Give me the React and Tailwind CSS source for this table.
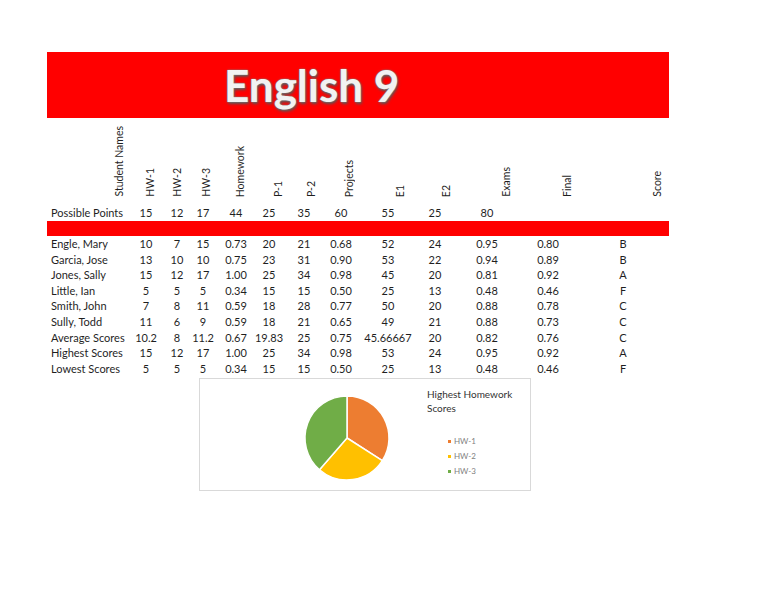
import React from "react";

const cols =
  "grid grid-cols-[84px_30px_32px_20px_46px_20px_50px_24px_70px_24px_80px_42px_108px]";

// header labels with left margin (in a centered cell) to nudge them right
const headers = [
  { label: "Student Names", ml: "ml-[60px]" },
  { label: "HW-1", ml: "ml-[8px]" },
  { label: "HW-2", ml: "ml-0" },
  { label: "HW-3", ml: "ml-[6px]" },
  { label: "Homework", ml: "ml-[8px]" },
  { label: "P-1", ml: "ml-[18px]" },
  { label: "P-2", ml: "ml-[14px]" },
  { label: "Projects", ml: "ml-[16px]" },
  { label: "E1", ml: "ml-[24px]" },
  { label: "E2", ml: "ml-[22px]" },
  { label: "Exams", ml: "ml-[38px]" },
  { label: "Final", ml: "ml-[38px]" },
  { label: "Score", ml: "ml-[68px]" },
];

const possible = ["15", "12", "17", "44", "25", "35", "60", "55", "25", "80", "", ""];

const rows = [
  ["Engle, Mary", "10", "7", "15", "0.73", "20", "21", "0.68", "52", "24", "0.95", "0.80", "B"],
  ["Garcia, Jose", "13", "10", "10", "0.75", "23", "31", "0.90", "53", "22", "0.94", "0.89", "B"],
  ["Jones, Sally", "15", "12", "17", "1.00", "25", "34", "0.98", "45", "20", "0.81", "0.92", "A"],
  ["Little, Ian", "5", "5", "5", "0.34", "15", "15", "0.50", "25", "13", "0.48", "0.46", "F"],
  ["Smith, John", "7", "8", "11", "0.59", "18", "28", "0.77", "50", "20", "0.88", "0.78", "C"],
  ["Sully, Todd", "11", "6", "9", "0.59", "18", "21", "0.65", "49", "21", "0.88", "0.73", "C"],
  ["Average Scores", "10.2", "8", "11.2", "0.67", "19.83", "25", "0.75", "45.66667", "20", "0.82", "0.76", "C"],
  ["Highest Scores", "15", "12", "17", "1.00", "25", "34", "0.98", "53", "24", "0.95", "0.92", "A"],
  ["Lowest Scores", "5", "5", "5", "0.34", "15", "15", "0.50", "25", "13", "0.48", "0.46", "F"],
];

const legend = [
  { name: "HW-1", color: "bg-[#ed7d31]" },
  { name: "HW-2", color: "bg-[#ffc000]" },
  { name: "HW-3", color: "bg-[#70ad47]" },
];

const PieChart = () => (
  <svg width="90" height="90" viewBox="0 0 90 90">
    <path d="M45 45 L45 3 A42 42 0 0 1 80.33 67.7 Z" fill="#ed7d31" stroke="#fff" strokeWidth="1.5" />
    <path d="M45 45 L80.33 67.7 A42 42 0 0 1 17.49 76.74 Z" fill="#ffc000" stroke="#fff" strokeWidth="1.5" />
    <path d="M45 45 L17.49 76.74 A42 42 0 0 1 45 3 Z" fill="#70ad47" stroke="#fff" strokeWidth="1.5" />
  </svg>
);

export default function App() {
  return (
    <div className="w-[768px] h-[594px] bg-white text-[#1f1f1f] font-['Lato',sans-serif] overflow-hidden">
      <div className="pt-[52px] pl-[47px]">
        {/* Title banner */}
        <div className="w-[622px] h-[66px] bg-[#ff0000] flex items-center pl-[177px]">
          <h1 className="text-[44px] font-bold leading-none text-[#f2f2f2] [text-shadow:0_0_1px_#777,0_0_2px_#888,1px_2px_3px_#555] -mt-[1px]">
            English 9
          </h1>
        </div>

        {/* Rotated column headers */}
        <div className={`${cols} h-[87px] pb-[8px] items-end text-[10.5px]`}>
          {headers.map((h) => (
            <div key={h.label} className="flex justify-center items-end">
              <span
                className={`${h.ml} [writing-mode:vertical-rl] rotate-180 leading-[13px] whitespace-nowrap`}
              >
                {h.label}
              </span>
            </div>
          ))}
        </div>

        {/* Possible points */}
        <div className={`${cols} h-[16px] items-center text-[11px]`}>
          <div className="pl-[4px] whitespace-nowrap">Possible Points</div>
          {possible.map((p, i) => (
            <div key={i} className="flex justify-center">
              {p}
            </div>
          ))}
        </div>

        <div className="w-[622px] h-[15px] bg-[#ff0000]" />

        {/* Student rows */}
        <div className="text-[11px]">
          {rows.map((r) => (
            <div key={r[0]} className={`${cols} h-[15.6px] items-center`}>
              <div className="pl-[4px] whitespace-nowrap">{r[0]}</div>
              {r.slice(1).map((v, i) => (
                <div key={i} className="flex justify-center whitespace-nowrap">
                  {v}
                </div>
              ))}
            </div>
          ))}
        </div>

        {/* Chart */}
        <div className="ml-[152px] mt-[2px] w-[332px] h-[113px] border border-[#d9d9d9] flex">
          <div className="pl-[102px] pt-[14px]">
            <PieChart />
          </div>
          <div className="ml-[35px] pt-[8px]">
            <div className="text-[10px] leading-[14px] text-[#333]">
              Highest Homework
              <br />
              Scores
            </div>
            <div className="mt-[21px] ml-[21px] flex flex-col gap-[4px]">
              {legend.map((l) => (
                <div key={l.name} className="flex items-center gap-[3px] text-[8px] leading-[11px] text-[#7f7f7f]">
                  <span className={`w-[3px] h-[3px] ${l.color}`} />
                  {l.name}
                </div>
              ))}
            </div>
          </div>
        </div>
      </div>
    </div>
  );
}
